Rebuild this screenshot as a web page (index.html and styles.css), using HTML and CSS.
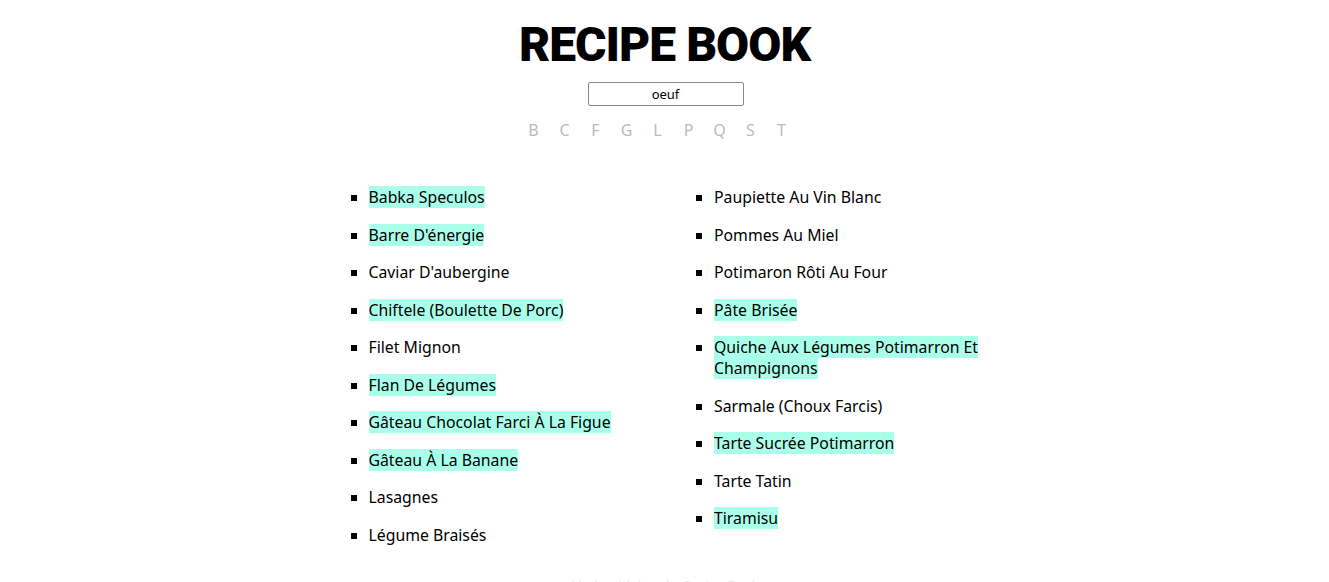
FILE: index.html
```html
<!DOCTYPE html>
<html lang="fr">
<head>
<meta charset="utf-8">
<title>Recipe Book</title>
<link rel="stylesheet" href="styles.css">
</head>
<body>
<header class="header">
  <h1 class="title">RECIPE BOOK</h1>
  <input class="search" type="text" value="oeuf">
  <nav class="letters">
    <span>B</span><span>C</span><span>F</span><span>G</span><span>L</span><span>P</span><span>Q</span><span>S</span><span>T</span>
  </nav>
</header>
<main class="main">
  <ul class="recipes">
    <li><mark>Babka Speculos</mark></li>
    <li><mark>Barre D'énergie</mark></li>
    <li>Caviar D'aubergine</li>
    <li><mark>Chiftele (Boulette De Porc)</mark></li>
    <li>Filet Mignon</li>
    <li><mark>Flan De Légumes</mark></li>
    <li><mark>Gâteau Chocolat Farci À La Figue</mark></li>
    <li><mark>Gâteau À La Banane</mark></li>
    <li>Lasagnes</li>
    <li>Légume Braisés</li>
    <li>Paupiette Au Vin Blanc</li>
    <li>Pommes Au Miel</li>
    <li>Potimaron Rôti Au Four</li>
    <li><mark>Pâte Brisée</mark></li>
    <li><mark>Quiche Aux Légumes Potimarron Et Champignons</mark></li>
    <li>Sarmale (Choux Farcis)</li>
    <li><mark>Tarte Sucrée Potimarron</mark></li>
    <li>Tarte Tatin</li>
    <li><mark>Tiramisu</mark></li>
  </ul>
</main>
<footer class="footer">Made with love by Recipe Book</footer>
</body>
</html>
```
FILE: styles.css
```css
html, body { margin: 0; padding: 0; background: #fff; }
body { font-family: "Noto Sans", "Open Sans", sans-serif; color: #000; }
.header { display: flex; flex-direction: column; align-items: center; padding-top: 18px; }
.title { margin: 0; font-family: Roboto, sans-serif; font-weight: 900; font-size: 48px; line-height: 54px; letter-spacing: -1px; }
.search { margin: 10px 0 0 2px; width: 156px; height: 24px; box-sizing: border-box; border: 1px solid #888; border-radius: 2px; text-align: center; font-family: "Noto Sans", sans-serif; font-size: 13px; padding: 0; color: #000; }
.letters { display: flex; gap: 16px; margin-top: 13px; padding-right: 14px; font-family: "Noto Sans", sans-serif; font-size: 16px; color: #bbb; }
.letters span { width: 15px; text-align: center; }
.main { display: flex; justify-content: center; padding-top: 46px; }
.recipes { width: 690px; margin: 0; padding: 0 0 0 49px; box-sizing: border-box; columns: 2; column-gap: 50px; list-style: square; font-size: 15.8px; line-height: 21px; }
.recipes li { margin: 0 0 16.5px 0; padding-left: 0; break-inside: avoid; }
mark { background: #aaffea; color: #000; }
.footer { text-align: center; font-size: 13px; color: #e8e8e8; padding-top: 22px; }
```
